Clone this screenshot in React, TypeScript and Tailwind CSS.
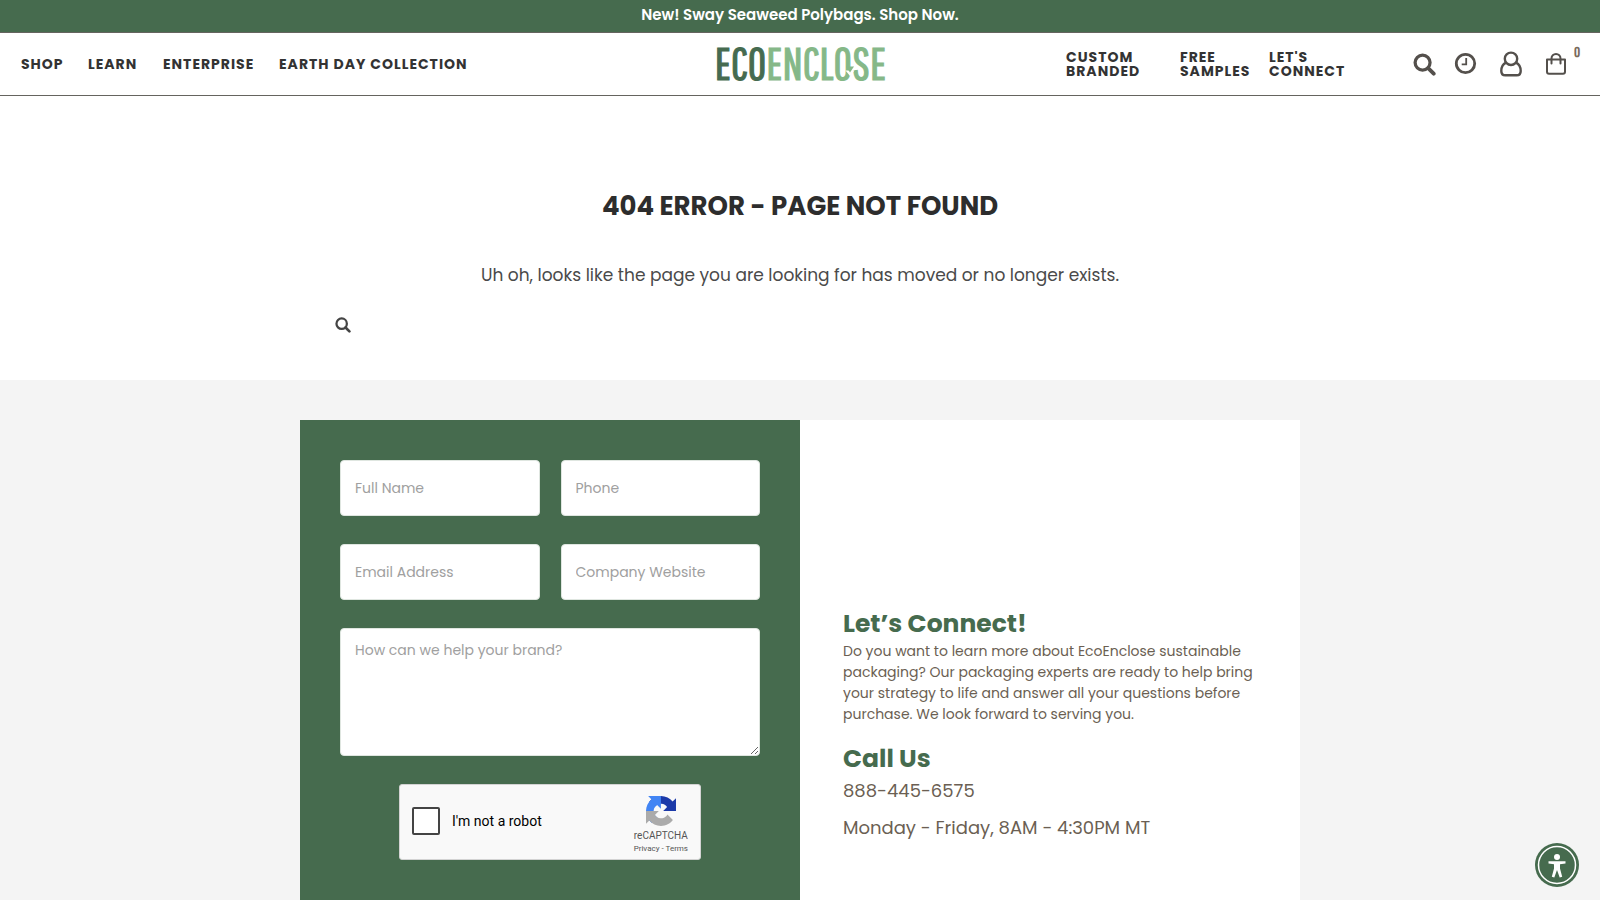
import type { ReactNode } from "react";

const leftLinks = [
  { label: "SHOP", width: "w-[67px]" },
  { label: "LEARN", width: "w-[75px]" },
  { label: "ENTERPRISE", width: "w-[116px]" },
  { label: "EARTH DAY COLLECTION", width: "w-[200px]" },
];

const rightLinks = [
  { label: "CUSTOM BRANDED", width: "w-[114px] pr-6" },
  { label: "FREE SAMPLES", width: "w-[89px] pr-3" },
  { label: "LET'S CONNECT", width: "w-[92px]" },
];

const fieldClass =
  "w-full rounded border border-[#dfe6e0] bg-white px-[14px] text-sm text-[#333] placeholder:text-[#a0a0a0] outline-none";

function SearchIcon({ className }: { className: string }) {
  return (
    <svg viewBox="0 0 24 24" className={className} fill="none" stroke="currentColor" aria-hidden="true">
      <circle cx="10" cy="10" r="7.8" strokeWidth="3.4" />
      <path d="M15.8 15.8 21.6 21.6" strokeWidth="4" strokeLinecap="round" />
    </svg>
  );
}

function ClockIcon() {
  return (
    <svg viewBox="0 0 24 24" className="size-6" fill="none" stroke="currentColor" aria-hidden="true">
      <circle cx="11.500" cy="11.500" r="9.2" strokeWidth="2.8" />
      <path d="M12.200 6.100v6.2H7.700" strokeWidth="1.8" />
    </svg>
  );
}

function UserIcon() {
  return (
    <svg viewBox="0 0 24 26" className="h-[26px] w-6" fill="none" stroke="currentColor" strokeWidth="2.4" aria-hidden="true">
      <circle cx="12" cy="7.800" r="6.200" />
      <path d="M7 11.600C3.600 13.200 2.300 16.600 2.300 20c0 2.600 1.500 4.300 4 4.300h11.400c2.500 0 4-1.700 4-4.300 0-3.400-1.300-6.800-4.700-8.400" />
    </svg>
  );
}

function BagIcon() {
  return (
    <svg viewBox="0 0 24 24" className="size-6" fill="none" stroke="currentColor" strokeWidth="2" aria-hidden="true">
      <path d="M3 7.500h18v12.200c0 1.200-.8 2-2 2H5c-1.200 0-2-.8-2-2z" strokeLinejoin="round" />
      <path d="M7.500 11.500V6.500a4.500 4.500 0 0 1 9 0v5" strokeLinecap="round" />
    </svg>
  );
}

function IconButton({ label, children }: { label: string; children: ReactNode }) {
  return (
    <button type="button" aria-label={label} className="flex size-6 items-center justify-center text-[#54504c]">
      {children}
    </button>
  );
}

function Logo() {
  return (
    <a
      href="#"
      aria-label="EcoEnclose home"
      className="relative flex w-[170px] shrink-0 justify-center pb-0.5 font-['Pathway_Gothic_One','Roboto_Condensed',sans-serif] text-[45px] leading-[44px] whitespace-nowrap [-webkit-text-stroke:1px]"
    >
      <span className="text-[#466b50]">ECO</span>
      <span className="text-[#85b888]">ENCLOSE</span>
      <svg viewBox="0 0 10 12" className="absolute top-[23px] left-[129px] h-3 w-2.5" aria-hidden="true">
        <path d="M.5 6.500h9L5 12z" fill="#fff" />
        <path d="M1 2.500h8L5 8.500z" fill="#85b888" />
      </svg>
    </a>
  );
}

function Header() {
  return (
    <header className="flex h-[63px] items-center border-b border-[#65645f] pr-5 pl-[21px] text-[#333]">
      <nav aria-label="Main" className="flex flex-1 text-sm leading-[14px] font-bold tracking-[1px] whitespace-nowrap">
        {leftLinks.map((l) => (
          <a key={l.label} href="#" className={l.width}>
            {l.label}
          </a>
        ))}
      </nav>
      <Logo />
      <div className="flex flex-1 items-center justify-end">
        <nav aria-label="Services" className="flex text-sm leading-[14px] font-bold tracking-[1px]">
          {rightLinks.map((l) => (
            <a key={l.label} href="#" className={l.width}>
              {l.label}
            </a>
          ))}
        </nav>
        <div className="ml-[51px] flex items-center gap-[21px]">
          <div className="flex items-center gap-[18px]">
            <IconButton label="Search">
              <SearchIcon className="size-[23px]" />
            </IconButton>
            <IconButton label="Recently viewed">
              <ClockIcon />
            </IconButton>
          </div>
          <IconButton label="Account">
            <UserIcon />
          </IconButton>
          <button type="button" aria-label="Cart, 0 items" className="flex items-start text-[#54504c]">
            <BagIcon />
            <span className="-mt-2 ml-1.5 w-1.5 font-['Pathway_Gothic_One',sans-serif] text-[15px] leading-4 font-bold text-[#7a6a5c]">
              0
            </span>
          </button>
        </div>
      </div>
    </header>
  );
}

function RecaptchaMark() {
  return (
    <svg viewBox="0 0 64 64" className="size-[30px]" aria-hidden="true">
      <path
        fill="#1c3aa9"
        d="M64 31.955l-.033-1.370V4.687l-7.160 7.160C50.948 4.674 42.033.093 32.050.093c-10.400 0-19.622 4.960-25.458 12.640l11.736 11.860a15.550 15.550 0 0 1 4.754-5.334c2.050-1.600 4.952-2.906 8.968-2.906.485 0 .86.057 1.135.163 4.976.393 9.288 3.140 11.828 7.124l-8.307 8.307L64 31.953"
      />
      <path
        fill="#4285f4"
        d="M31.862.094l-1.370.033H4.594l7.160 7.160C4.580 13.147 0 22.060 0 32.046c0 10.400 4.960 19.622 12.640 25.458L24.500 45.768a15.550 15.550 0 0 1-5.334-4.754c-1.600-2.050-2.906-4.952-2.906-8.968 0-.485.057-.86.163-1.135.393-4.976 3.140-9.288 7.124-11.828l8.307 8.307L31.860.095"
      />
      <path
        fill="#ababab"
        d="M.001 32.045l.033 1.370v25.898l7.160-7.160c5.860 7.173 14.774 11.754 24.760 11.754 10.400 0 19.622-4.960 25.458-12.640l-11.736-11.860a15.550 15.550 0 0 1-4.754 5.334c-2.050 1.600-4.952 2.906-8.968 2.906-.485 0-.86-.057-1.135-.163-4.976-.393-9.288-3.140-11.828-7.124l8.307-8.307L.001 32.045"
      />
    </svg>
  );
}

function Recaptcha() {
  return (
    <div className="flex h-[76px] w-[302px] items-center justify-between self-center rounded-[3px] border border-[#d3d3d3] bg-[#f9f9f9] pr-3 pl-3 font-[Roboto,sans-serif]">
      <label className="flex items-center gap-3 pb-0.5 text-sm text-black">
        <input type="checkbox" className="size-7 appearance-none rounded-[2px] border-2 border-[#444] bg-white" />
        I'm not a robot
      </label>
      <div className="flex flex-col items-center self-start pt-[11px] text-[#555]">
        <RecaptchaMark />
        <span className="pt-1 text-[10px] leading-3">reCAPTCHA</span>
        <span className="pt-0.5 text-[8px] leading-[10px]">
          <a href="#">Privacy</a> - <a href="#">Terms</a>
        </span>
      </div>
    </div>
  );
}

function ContactForm() {
  return (
    <form className="flex flex-col gap-7 bg-[#466b4e] p-10">
      <div className="grid grid-cols-2 gap-x-[21px] gap-y-7">
        <input aria-label="Full Name" placeholder="Full Name" className={`${fieldClass} h-14`} />
        <input aria-label="Phone" type="tel" placeholder="Phone" className={`${fieldClass} h-14`} />
        <input aria-label="Email Address" type="email" placeholder="Email Address" className={`${fieldClass} h-14`} />
        <input aria-label="Company Website" placeholder="Company Website" className={`${fieldClass} h-14`} />
      </div>
      <textarea
        aria-label="How can we help your brand?"
        placeholder="How can we help your brand?"
        className={`${fieldClass} h-32 resize py-[11px] leading-[21px]`}
      />
      <Recaptcha />
    </form>
  );
}

function ContactInfo() {
  return (
    <section className="flex flex-col justify-end bg-white px-[43px] pb-[58px] text-[#6b5f53]">
      <h2 className="text-[25px] leading-[35px] font-bold text-[#466b4e]">Let’s Connect!</h2>
      <p className="pb-4 text-sm leading-[21px]">
        Do you want to learn more about EcoEnclose sustainable packaging? Our packaging experts are ready to help bring
        your strategy to life and answer all your questions before purchase. We look forward to serving you.
      </p>
      <h2 className="text-[25px] leading-[35px] font-bold text-[#466b4e]">Call Us</h2>
      <a href="tel:8884456575" className="pb-2 text-[18px] leading-[29px]">
        888-445-6575
      </a>
      <p className="text-[18px] leading-[29px]">Monday - Friday, 8AM - 4:30PM MT</p>
    </section>
  );
}

export default function App() {
  return (
    <div className="flex min-h-screen flex-col bg-white font-[Poppins,Inter,sans-serif]">
      <a
        href="#"
        className="flex h-[33px] items-center justify-center border-b border-[#65645f] bg-[#466b4e] pb-0.5 text-[15px] font-semibold text-white"
      >
        New! Sway Seaweed Polybags. Shop Now.
      </a>
      <Header />
      <main className="flex grow flex-col">
        <div className="mx-auto w-full max-w-[1000px] pt-[90px] pb-[47px]">
          <h1 className="text-center text-[26px] leading-10 font-bold text-[#2d2d2d]">404 ERROR - PAGE NOT FOUND</h1>
          <p className="pt-[35px] text-center text-[17px] leading-[28px] text-[#4a4a4a]">
            Uh oh, looks like the page you are looking for has moved or no longer exists.
          </p>
          <button type="button" aria-label="Search" className="mt-[28px] ml-[35px] flex text-[#444]">
            <SearchIcon className="size-4" />
          </button>
        </div>
        <div className="flex grow flex-col bg-[#f4f4f4] pt-10">
          <div className="mx-auto grid w-full max-w-[1000px] grow grid-cols-2">
            <ContactForm />
            <ContactInfo />
          </div>
        </div>
      </main>
      <button
        type="button"
        aria-label="Accessibility options"
        className="fixed right-[21px] bottom-[13px] flex size-11 items-center justify-center rounded-full bg-[#466b4e] text-white"
      >
        <svg viewBox="0 0 44 44" className="size-11" aria-hidden="true">
          <circle cx="22" cy="22" r="18.500" fill="none" stroke="currentColor" strokeWidth="1.500" />
          <circle cx="22" cy="14" r="3" fill="currentColor" />
          <path
            d="M13.500 18.200h17v2.300l-5.500.8v4.200l2.200 8.300-2.500.7-2.700-7.500-2.700 7.500-2.500-.7 2.200-8.300v-4.200l-5.500-.8z"
            fill="currentColor"
          />
        </svg>
      </button>
    </div>
  );
}
